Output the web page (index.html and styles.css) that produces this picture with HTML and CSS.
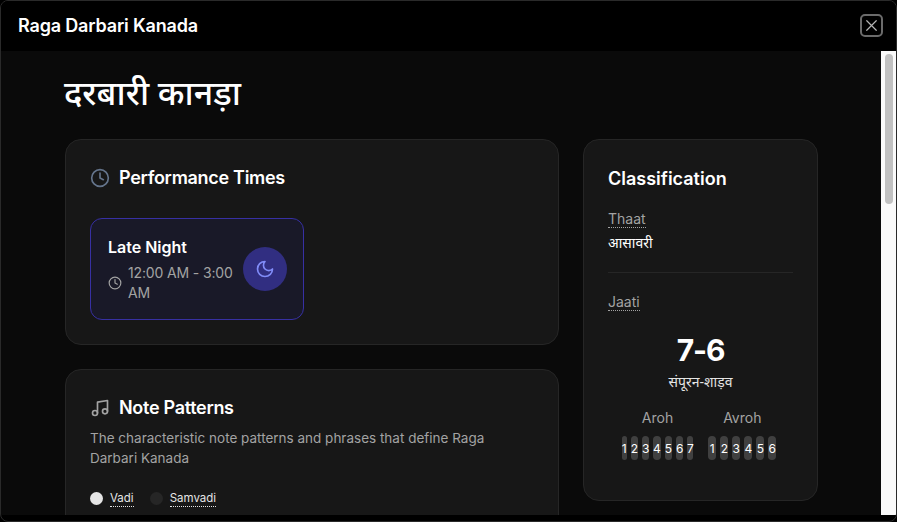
FILE: index.html
```html
<!DOCTYPE html>
<html lang="en">
<head>
<meta charset="utf-8">
<title>Raga Darbari Kanada</title>
<link rel="stylesheet" href="styles.css">
</head>
<body>
<div class="dialog">
  <header class="dialog-header">
    <h2 class="dialog-title">Raga Darbari Kanada</h2>
    <button class="close-btn" aria-label="Close">
      <svg viewBox="0 0 24 24" class="close-icon"><path d="M18 6 6 18M6 6l12 12"/></svg>
    </button>
  </header>
  <div class="dialog-scroll">
    <div class="dialog-body">
      <main class="content">
        <h1 class="raga-name">दरबारी कानड़ा</h1>
        <div class="columns">
          <div class="col-main">
            <section class="card">
              <div class="card-heading">
                <svg viewBox="0 0 24 24" class="icon icon-clock"><circle cx="12" cy="12" r="10"/><path d="M12 6v6l4 2"/></svg>
                <h3>Performance Times</h3>
              </div>
              <div class="time-card">
                <div class="time-info">
                  <div class="time-name">Late Night</div>
                  <div class="time-range">
                    <svg viewBox="0 0 24 24" class="icon-small"><circle cx="12" cy="12" r="10"/><path d="M12 6v6l4 2"/></svg>
                    <span>12:00 AM - 3:00 AM</span>
                  </div>
                </div>
                <div class="moon-badge">
                  <svg viewBox="0 0 24 24" class="moon"><path d="M12 3a6 6 0 0 0 9 9 9 9 0 1 1-9-9Z"/></svg>
                </div>
              </div>
            </section>
            <section class="card card-notes">
              <div class="card-heading heading-tight">
                <svg viewBox="0 0 24 24" class="icon icon-music"><path d="M9 18V5l12-2v13"/><circle cx="6" cy="18" r="3"/><circle cx="18" cy="16" r="3"/></svg>
                <h3>Note Patterns</h3>
              </div>
              <p class="desc">The characteristic note patterns and phrases that define Raga Darbari Kanada</p>
              <div class="legend">
                <span class="dot dot-vadi"></span><span class="legend-label">Vadi</span>
                <span class="dot dot-samvadi"></span><span class="legend-label">Samvadi</span>
              </div>
            </section>
          </div>
          <aside class="card card-side">
            <h3 class="side-title">Classification</h3>
            <div class="field">
              <span class="field-label">Thaat</span>
              <div class="field-value">आसावरी</div>
            </div>
            <div class="divider"></div>
            <span class="field-label">Jaati</span>
            <div class="jaati-number">7-6</div>
            <div class="jaati-name">संपूरन-शाड़व</div>
            <div class="scales">
              <div class="scale">
                <div class="scale-name">Aroh</div>
                <div class="pills">
                  <span class="pill pill-first">1</span><span class="pill pill-mid">2</span><span class="pill pill-mid">3</span><span class="pill pill-mid">4</span><span class="pill pill-mid">5</span><span class="pill pill-mid">6</span><span class="pill pill-last">7</span>
                </div>
              </div>
              <div class="scale">
                <div class="scale-name">Avroh</div>
                <div class="pills">
                  <span class="pill">1</span><span class="pill">2</span><span class="pill">3</span><span class="pill">4</span><span class="pill">5</span><span class="pill">6</span>
                </div>
              </div>
            </div>
          </aside>
        </div>
      </main>
    </div>
    <div class="scrollbar"><div class="scroll-thumb"></div></div>
  </div>
</div>
</body>
</html>
```
FILE: styles.css
```css
* { box-sizing: border-box; }
html, body { margin: 0; height: 100%; background: #000; overflow: hidden; }
body { font-family: Inter, "Noto Sans", "Liberation Sans", sans-serif; color: #fff; }
.dialog { height: 522px; display: flex; flex-direction: column; background: #000; border: 1px solid #2a2a2a; border-radius: 8px; padding-bottom: 6px; overflow: hidden; }
.dialog-header { height: 50px; flex: none; display: flex; align-items: center; justify-content: space-between; padding: 0 13px 2px 17px; background: #000; }
.dialog-title { margin: 0; font-size: 18px; font-weight: 600; letter-spacing: -0.17px; }
.close-btn { width: 23px; height: 23px; padding: 0; display: flex; align-items: center; justify-content: center; background: transparent; border: 2px solid #6b6b6b; border-radius: 5px; }
.close-icon { width: 19px; height: 19px; flex: none; fill: none; stroke: #b5b5b5; stroke-width: 1.5; stroke-linecap: round; }
.dialog-scroll { flex: 1; min-height: 0; display: flex; }
.dialog-body { flex: 1; min-width: 0; overflow: hidden; background: #0a0a0a; }
.content { padding: 14px 63px 0 63px; }
.raga-name { margin: 0 0 20px; font-size: 34px; line-height: 54px; font-weight: 500; font-family: "Noto Sans", sans-serif; }
.columns { display: flex; gap: 24px; align-items: flex-start; padding-left: 1px; }
.col-main { width: 494px; flex: none; display: flex; flex-direction: column; gap: 24px; }
.card { background: #171717; border: 1px solid #262626; border-radius: 16px; padding: 24px; }
.card-heading { display: flex; align-items: center; gap: 9px; height: 28px; margin-bottom: 26px; }
.heading-tight { margin-bottom: 6px; }
.card-heading h3 { margin: 0; font-size: 18px; font-weight: 600; line-height: 28px; letter-spacing: -0.3px; }
.side-title { margin: 0 0 15px; font-size: 18px; font-weight: 600; line-height: 28px; }
.icon { width: 20px; height: 20px; fill: none; stroke-width: 2; stroke-linecap: round; stroke-linejoin: round; }
.icon-clock { stroke: #64748b; }
.icon-music { stroke: #a3a3a3; }
.time-card { width: 214px; height: 102px; display: flex; align-items: center; gap: 8px; padding: 0 16px 0 17px; background: #191928; border: 1px solid #3730a3; border-radius: 12px; }
.time-info { flex: 1; min-width: 0; }
.time-name { font-size: 16px; font-weight: 600; line-height: 24px; margin-bottom: 4px; }
.time-range { display: flex; align-items: center; gap: 6px; font-size: 14px; line-height: 20px; color: #a3a3a3; letter-spacing: -0.14px; }
.icon-small { width: 14px; height: 14px; flex: none; fill: none; stroke: #a3a3a3; stroke-width: 2; stroke-linecap: round; stroke-linejoin: round; }
.moon-badge { width: 44px; height: 44px; flex: none; border-radius: 50%; background: #312e81; display: flex; align-items: center; justify-content: center; }
.moon { width: 20px; height: 20px; fill: none; stroke: #818cf8; stroke-width: 2; stroke-linecap: round; stroke-linejoin: round; }
.card-notes { height: 200px; }
.desc { margin: 0; font-size: 13.5px; line-height: 20px; color: #a3a3a3; }
.legend { display: flex; align-items: center; margin-top: 22px; font-size: 11.5px; line-height: 16px; }
.dot { width: 13px; height: 13px; border-radius: 50%; margin-right: 7px; }
.dot-vadi { background: #e5e5e5; }
.dot-samvadi { background: #262626; margin-left: 16px; }
.legend-label { color: #e5e5e5; border-bottom: 1px dotted #e5e5e5; }
.card-side { width: 235px; flex: none; padding: 25px 24px 24px; height: 362px; }
.field-label { display: inline-block; font-size: 14px; line-height: 16px; color: #a3a3a3; border-bottom: 1px dotted #a3a3a3; }
.field-value { font-size: 14px; line-height: 20px; font-weight: 400; margin-top: 5px; font-family: "Noto Sans", sans-serif; }
.divider { height: 1px; background: #262626; margin: 19px 0 18px; }
.jaati-number { text-align: center; font-size: 30px; line-height: 36px; font-weight: 700; margin-top: 21px; letter-spacing: -1.2px; }
.jaati-name { text-align: center; font-size: 14px; line-height: 20px; margin-top: 4px; font-family: "Noto Sans", sans-serif; color: #e5e5e5; }
.scales { display: flex; justify-content: center; gap: 15px; margin-top: 16px; padding-right: 3px; }
.scale { display: flex; flex-direction: column; align-items: center; }
.scale-name { font-size: 14px; line-height: 20px; color: #a3a3a3; margin-bottom: 8px; }
.pills { display: flex; gap: 4px; }
.pill { width: 8px; height: 24px; border-radius: 4px; background: #404040; display: flex; align-items: center; justify-content: center; font-size: 12px; color: #fff; }
.pill-first { width: 5px; }
.pill-mid { width: 7.33px; }
.pill-last { width: 6px; }
.scrollbar { width: 15px; flex: none; background: #fafafa; padding: 3px 3px 0 4px; }
.scroll-thumb { height: 150px; border-radius: 4px; background: #c1c1c1; }
```
